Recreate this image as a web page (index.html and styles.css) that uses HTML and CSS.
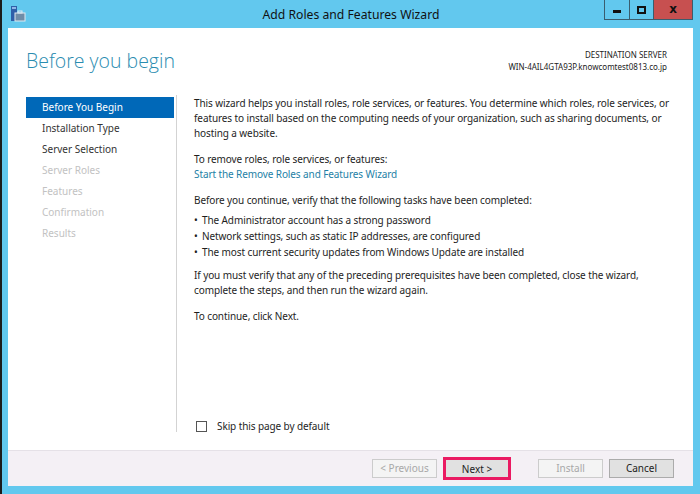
FILE: index.html
```html
<html>
<head>
<link rel="stylesheet" href="styles.css">
</head>
<body>
<div class="window">
    <div class="titlebar">
        <svg class="app-icon" width="16" height="16" viewBox="0 0 16 16">
            <rect x="1" y="0" width="6" height="15" fill="#2f5fa8"/>
            <rect x="2" y="1" width="4" height="2" fill="#8fb6e8"/>
            <rect x="5" y="7" width="10" height="8" fill="#6f8da8" stroke="#dfe8f0" stroke-width="1"/>
            <rect x="8" y="5" width="4" height="2" fill="none" stroke="#dfe8f0" stroke-width="1"/>
        </svg>
        <span class="title">Add Roles and Features Wizard</span>
        <div class="caption-buttons">
            <div class="cap-btn"><span class="min-glyph"></span></div>
            <div class="cap-btn"><span class="max-glyph"></span></div>
            <div class="cap-btn close">x</div>
        </div>
    </div>
    <div class="client">
        <div class="head">
            <div class="heading">Before you begin</div>
            <div class="dest">
                <div>DESTINATION SERVER</div>
                <div>WIN-4AIL4GTA93P.knowcomtest0813.co.jp</div>
            </div>
        </div>
        <div class="main">
            <div class="nav">
                <div class="nav-item selected">Before You Begin</div>
                <div class="nav-item">Installation Type</div>
                <div class="nav-item">Server Selection</div>
                <div class="nav-item disabled">Server Roles</div>
                <div class="nav-item disabled">Features</div>
                <div class="nav-item disabled">Confirmation</div>
                <div class="nav-item disabled">Results</div>
            </div>
            <div class="content">
                <p>This wizard helps you install roles, role services, or features. You determine which roles, role services, or features to install based on the computing needs of your organization, such as sharing documents, or hosting a website.</p>
                <p>To remove roles, role services, or features:<br><span class="link">Start the Remove Roles and Features Wizard</span></p>
                <p class="before-list">Before you continue, verify that the following tasks have been completed:</p>
                <ul>
                    <li>The Administrator account has a strong password</li>
                    <li>Network settings, such as static IP addresses, are configured</li>
                    <li>The most current security updates from Windows Update are installed</li>
                </ul>
                <p>If you must verify that any of the preceding prerequisites have been completed, close the wizard, complete the steps, and then run the wizard again.</p>
                <p>To continue, click Next.</p>
                <div class="skip">
                    <span class="checkbox"></span>
                    <span>Skip this page by default</span>
                </div>
            </div>
        </div>
        <div class="footer">
            <div class="btn disabled">&lt; Previous</div>
            <div class="btn next">Next &gt;</div>
            <div class="btn disabled install">Install</div>
            <div class="btn">Cancel</div>
        </div>
    </div>
</div>
</body>
</html>
```

FILE: styles.css
```css
* {
    box-sizing: border-box;
}

body {
    margin: 0;
    width: 700px;
    height: 494px;
    overflow: hidden;
    font-family: "Noto Sans", "Open Sans", sans-serif;
    color: #1e1e1e;
}

.window {
    width: 700px;
    height: 494px;
    background: #62c8ee;
    border-left: 2px solid #1b1b1b;
    display: flex;
    flex-direction: column;
}

.titlebar {
    height: 28px;
    display: flex;
    align-items: flex-start;
    position: relative;
}

.app-icon {
    margin: 6px 0 0 8px;
}

.title {
    position: absolute;
    left: 0;
    right: 0;
    top: 6px;
    text-align: center;
    font-size: 12.2px;
    color: #111;
}

.caption-buttons {
    margin-left: auto;
    margin-right: 7px;
    display: flex;
    height: 20px;
    border: 1px solid #3a5d6e;
    border-top: none;
}

.cap-btn {
    width: 24px;
    height: 19px;
    border-left: 1px solid #3a5d6e;
    display: flex;
    align-items: center;
    justify-content: center;
}

.cap-btn:first-child {
    border-left: none;
}

.min-glyph {
    width: 8px;
    height: 3px;
    margin-top: 4px;
    background: #111;
}

.max-glyph {
    width: 9px;
    height: 8px;
    border: 2px solid #111;
}

.close {
    width: 39px;
    background: #c75050;
    color: #111;
    font-weight: bold;
    font-size: 12px;
    font-family: "DejaVu Sans", sans-serif;
    padding-bottom: 2px;
}

.client {
    flex: 1;
    margin: 0 7px 8px 6px;
    background: #fff;
    display: flex;
    flex-direction: column;
}

.head {
    height: 67px;
    display: flex;
    justify-content: space-between;
    padding: 19px 26px 0 18px;
}

.heading {
    font-family: "Open Sans", sans-serif;
    font-weight: 300;
    font-size: 19.5px;
    color: #2a8cb0;
}

.dest {
    text-align: right;
    font-size: 8px;
    line-height: 12px;
    padding-top: 2px;
    color: #222;
}

.main {
    flex: 1;
    display: flex;
    padding-left: 18px;
}

.nav {
    width: 151px;
    border-right: 1px solid #d3d3d3;
    margin-bottom: 18px;
    padding-top: 2px;
    font-size: 10px;
}

.nav-item {
    height: 21px;
    line-height: 20px;
    padding-left: 16px;
    margin-right: 2px;
    color: #333;
}

.nav-item.selected {
    background: #0068b8;
    color: #fff;
}

.nav-item.disabled {
    color: #c2c2c2;
}

.content {
    flex: 1;
    padding: 0.5px 20px 0 17px;
    font-size: 10px;
    letter-spacing: -0.1px;
    line-height: 15px;
    display: flex;
    flex-direction: column;
}

.content p {
    margin: 0 0 11px 0;
}

.content p.before-list {
    margin-bottom: 4px;
}

.link {
    color: #1e7fa6;
}

.content ul {
    margin: 0 0 8px 0;
    padding: 0;
    list-style: none;
}

.content li {
    line-height: 16px;
}

.content li::before {
    content: "\2022";
    display: inline-block;
    width: 8px;
}

.skip {
    margin-top: auto;
    margin-bottom: 16px;
    display: flex;
    align-items: center;
    gap: 10px;
    padding-left: 2px;
}

.checkbox {
    width: 11px;
    height: 11px;
    border: 1px solid #555;
}

.footer {
    height: 36px;
    background: #f4f0f5;
    border-top: 1px solid #e5e1e7;
    display: flex;
    align-items: center;
    justify-content: flex-end;
    padding-right: 19px;
    gap: 6px;
}

.btn {
    width: 65px;
    height: 19px;
    border: 1px solid #ababab;
    background: #e1e1e1;
    font-size: 10px;
    line-height: 17px;
    text-align: center;
    color: #222;
}

.btn.disabled {
    background: #f4f4f4;
    border-color: #cccccc;
    color: #a8a8a8;
}

.btn.next {
    width: 68px;
    height: 23px;
    line-height: 19px;
    border: 3px solid #ea1a62;
    background: #e1e1e1;
}

.btn.install {
    margin-left: 21px;
}
```
